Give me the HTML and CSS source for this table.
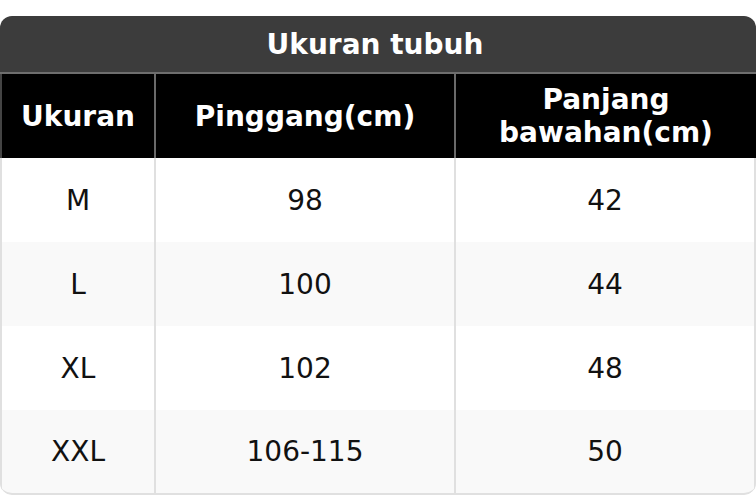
FILE: index.html
```html
<!DOCTYPE html>
<html>
<head>
<meta charset="utf-8">
<link rel="stylesheet" href="styles.css">
</head>
<body>
<div class="card">
  <div class="title">Ukuran tubuh</div>
  <div class="row head">
    <div class="cell">Ukuran</div>
    <div class="cell">Pinggang(cm)</div>
    <div class="cell">Panjang<br>bawahan(cm)</div>
  </div>
  <div class="row body">
    <div class="cell">M</div>
    <div class="cell">98</div>
    <div class="cell">42</div>
  </div>
  <div class="row body alt">
    <div class="cell">L</div>
    <div class="cell">100</div>
    <div class="cell">44</div>
  </div>
  <div class="row body">
    <div class="cell">XL</div>
    <div class="cell">102</div>
    <div class="cell">48</div>
  </div>
  <div class="row body alt last">
    <div class="cell">XXL</div>
    <div class="cell">106-115</div>
    <div class="cell">50</div>
  </div>
</div>
</body>
</html>
```

FILE: styles.css
```css
html, body {
  margin: 0;
  padding: 0;
  background: #ffffff;
}
body {
  font-family: "DejaVu Sans", "Liberation Sans", sans-serif;
  font-size: 28px;
}
.card {
  margin-top: 16px;
  width: 756px;
  border-radius: 12px;
  overflow: hidden;
  background: #ffffff;
}
.title {
  height: 56px;
  padding-right: 6px;
  background: #3c3c3c;
  color: #ffffff;
  font-weight: bold;
  display: flex;
  align-items: center;
  justify-content: center;
  border-bottom: 2px solid #6e6e6e;
}
.row {
  display: grid;
  grid-template-columns: 154px 300px 1fr;
  height: 84px;
}
.cell {
  display: flex;
  align-items: center;
  justify-content: center;
  text-align: center;
  line-height: 33px;
}
.head {
  background: #000000;
  color: #ffffff;
  font-weight: bold;
}
.head .cell {
  border-left: 2px solid #6a6a6a;
}
.head .cell:first-child {
  border-left-color: #444444;
}
.body {
  color: #111111;
  background: #ffffff;
}
.body.alt {
  background: #f9f9f9;
}
.body .cell {
  border-left: 2px solid #e0e0e0;
}
.body .cell:last-child {
  border-right: 2px solid #e0e0e0;
}
.last {
  height: 83px;
  border-bottom: 2px solid #e0e0e0;
  border-radius: 0 0 12px 12px;
}
```
